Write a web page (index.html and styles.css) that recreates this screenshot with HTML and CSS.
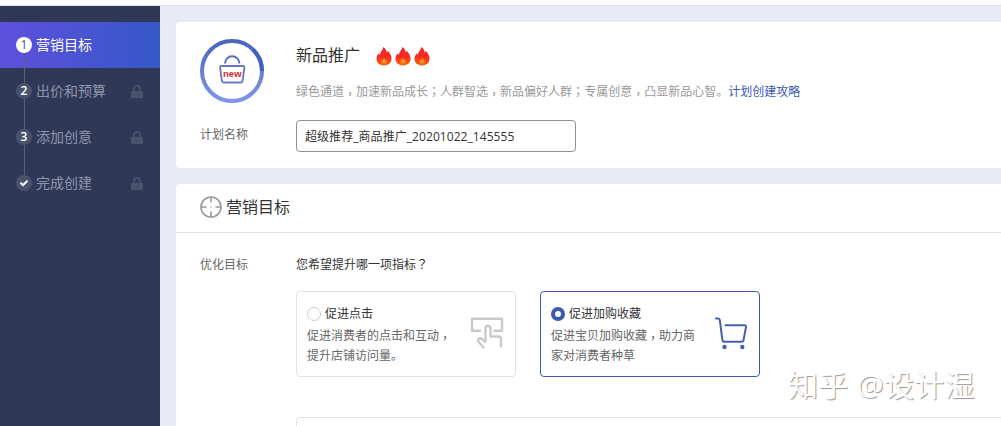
FILE: index.html
```
<!DOCTYPE html>
<html lang="zh-CN">
<head>
    <meta charset="UTF-8">
    <meta name="viewport" content="width=device-width, initial-scale=1.0">
    <title>新品推广</title>
    <link rel="stylesheet" href="styles.css">
</head>
<body>
    <svg class="sprite" aria-hidden="true">
        <symbol id="lock" viewBox="0 0 12 14">
            <path d="M3 6V4a3 3 0 0 1 6 0v2" fill="none" stroke="currentColor" stroke-width="1.8"/>
            <path d="M1 6h10a1 1 0 0 1 1 1v5a1 1 0 0 1-1 1H1a1 1 0 0 1-1-1V7a1 1 0 0 1 1-1z" fill="currentColor"/>
            <circle cx="6" cy="9.5" r=".8" fill="#3b4360"/>
        </symbol>
        <linearGradient id="flame-fill" x1="0" y1="0" x2="0" y2="1">
            <stop offset="0" stop-color="#f4242c"/>
            <stop offset="0.5" stop-color="#f62a22"/>
            <stop offset="1" stop-color="#f4660f"/>
        </linearGradient>
        <symbol id="flame" viewBox="0 0 17 20">
            <path d="M7.500 0C10.500 1.500 11.300 4 11.400 6.200 12 5.500 12.200 4.700 12.200 4 15 6.500 16.500 9.500 16.500 12.500 16.500 17 13 19.500 8.500 19.500S.5 17 .5 12.500C.5 9.500 2 7.700 3.200 6.500 3.400 7.500 3.700 8 4.300 8.500 4.200 5 7.500 3.500 7.500 0z" fill="url(#flame-fill)"/>
            <path d="M8.500 11c.3 1.500 3.300 2.300 3.300 4.700 0 1.900-1.500 2.800-3.300 2.800s-3.300-.9-3.300-2.800c0-2.400 3-3.200 3.300-4.700z" fill="#f86a12"/>
            <circle cx="8.500" cy="15.300" r="2" fill="#fa9422"/>
        </symbol>
    </svg>

    <div class="topbar"></div>
    <div class="layout">
        <nav class="sidebar">
            <div class="step active">
                <span class="step-num">1</span>
                <span class="step-name">营销目标</span>
            </div>
            <div class="step">
                <span class="step-num">2</span>
                <span class="step-name">出价和预算</span>
                <svg class="lock"><use href="#lock"/></svg>
            </div>
            <div class="step">
                <span class="step-num">3</span>
                <span class="step-name">添加创意</span>
                <svg class="lock"><use href="#lock"/></svg>
            </div>
            <div class="step">
                <span class="step-num">
                    <svg class="check" viewBox="0 0 10 8"><path d="M1.500 3.800l2.500 2.300 4.500-4.300"/></svg>
                </span>
                <span class="step-name">完成创建</span>
                <svg class="lock"><use href="#lock"/></svg>
            </div>
        </nav>

        <main class="content">
            <section class="card plan">
                <div class="plan-head">
                    <svg class="plan-logo" viewBox="0 0 64 64">
                        <defs>
                            <linearGradient id="ring" x1="0" y1="0" x2="0" y2="1">
                                <stop offset="0" stop-color="#4a66bc"/>
                                <stop offset="1" stop-color="#8094ea"/>
                            </linearGradient>
                        </defs>
                        <circle cx="32" cy="32" r="30" fill="none" stroke="url(#ring)" stroke-width="4"/>
                        <path d="M53.200 10.800A30 30 0 0 1 62 32" fill="none" stroke="#4160b8" stroke-width="4"/>
                        <path d="M25 24.500a7.200 7.200 0 0 1 14.400 0" fill="none" stroke="#5a70bd" stroke-width="2"/>
                        <path d="M21.500 27h21.500q1.600 0 1.400 1.600l-1.800 13.200q-.2 1.700-1.800 1.700H23.700q-1.600 0-1.800-1.700l-1.800-13.200Q19.900 27 21.500 27z" fill="none" stroke="#6478c8" stroke-width="1.800"/>
                        <text class="logo-text" x="32.300" y="37.800">new</text>
                    </svg>
                    <div class="plan-info">
                        <div class="plan-title">
                            <h1>新品推广</h1>
                            <span class="flames">
                                <svg><use href="#flame"/></svg>
                                <svg><use href="#flame"/></svg>
                                <svg><use href="#flame"/></svg>
                            </span>
                        </div>
                        <p class="plan-desc">绿色通道<span class="punct comma" lang="zh-TW">，</span>加速新品成长<span class="punct" lang="zh-TW">；</span>人群智选<span class="punct comma" lang="zh-TW">，</span>新品偏好人群<span class="punct" lang="zh-TW">；</span>专属创意<span class="punct comma" lang="zh-TW">，</span>凸显新品心智。<a href="#">计划创建攻略</a></p>
                    </div>
                </div>
                <div class="row">
                    <label class="row-label" for="plan-name">计划名称</label>
                    <input type="text" id="plan-name" value="超级推荐_商品推广_20201022_145555">
                </div>
            </section>

            <section class="card goal">
                <div class="card-header">
                    <svg class="target" viewBox="0 0 22 22">
                        <circle cx="11" cy="11" r="10"/>
                        <path d="M11 1v5.500M11 15.500V21M1 11h5.500M15.500 11H21M10.500 11h1"/>
                    </svg>
                    <h2>营销目标</h2>
                </div>
                <div class="row goal-row">
                    <span class="row-label">优化目标</span>
                    <div class="goal-body">
                        <p class="question">您希望提升哪一项指标<span class="punct" lang="zh-TW">？</span></p>
                        <div class="options">
                            <div class="option">
                                <div class="option-text">
                                    <div class="option-name"><i class="radio"></i>促进点击</div>
                                    <p>促进消费者的点击和互动<span class="punct comma" lang="zh-TW">，</span><br>提升店铺访问量。</p>
                                </div>
                                <svg class="option-icon" viewBox="0 0 34 34">
                                    <path d="M11 14.800H2V2.800h30v12h-8.500"/>
                                    <path d="M15.500 26.500V12.500a2.500 2.500 0 0 1 5 0V20.500h8q2.500 0 2.500 2.500v8.500"/>
                                    <path d="M15.500 26.500l-3.500-3.500q-2-1.500-3.300-.2t0 3.200l5.300 6"/>
                                </svg>
                            </div>
                            <div class="option selected">
                                <div class="option-text">
                                    <div class="option-name"><i class="radio"></i>促进加购收藏</div>
                                    <p>促进宝贝加购收藏<span class="punct comma" lang="zh-TW">，</span>助力商<br>家对消费者种草</p>
                                </div>
                                <svg class="option-icon" viewBox="0 0 34 34">
                                    <path d="M2 2.500H4q1.500 0 1.800 1.500l2.600 20q.3 1.800 2 1.800H27.500q1.700 0 2-1.600L32 11q.3-1.700-1.500-1.700H11.500"/>
                                    <circle cx="10.500" cy="31" r="2.200"/>
                                    <circle cx="28.300" cy="31" r="2.200"/>
                                </svg>
                            </div>
                        </div>
                        <div class="panel"></div>
                    </div>
                </div>
            </section>
        </main>
    </div>
    <div class="watermark">知乎 @设计湿</div>
</body>
</html>
```

FILE: styles.css
```
:root {
    --primary: #3b59b0;
    --sidebar: #303857;
    --page-bg: #e7eaf3;
    --text: #333;
    --text-secondary: #666;
    --text-light: #999;
    --border: #e2e3e6;
}

* {
    margin: 0;
    padding: 0;
    box-sizing: border-box;
}

body {
    height: 426px;
    overflow: hidden;
    display: flex;
    flex-direction: column;
    background: var(--page-bg);
    color: var(--text);
    font-family: "Open Sans", "Noto Sans CJK SC", sans-serif;
    font-size: 12px;
    line-height: 20px;
}

.sprite {
    position: absolute;
    width: 0;
    height: 0;
}

.topbar {
    flex: none;
    height: 6px;
    background: #fff;
    border-bottom: 1px solid #dcdee2;
}

.layout {
    flex: 1;
    min-height: 0;
    display: flex;
}

/* Sidebar */
.sidebar {
    width: 160px;
    padding-top: 16px;
    background: var(--sidebar);
}

.step {
    position: relative;
    display: flex;
    align-items: center;
    height: 46px;
    padding: 0 17px 0 16px;
    color: #8f96ac;
    font-size: 14px;
}

.step.active {
    background: linear-gradient(90deg, #5f50dc, #3558c8);
    color: #fff;
}

.step:not(:last-child)::after {
    content: "";
    position: absolute;
    left: 24px;
    top: 31px;
    width: 1px;
    height: 30px;
    background: #596079;
}

.step-num {
    display: flex;
    align-items: center;
    justify-content: center;
    width: 16px;
    height: 16px;
    margin-right: 4px;
    border-radius: 50%;
    background: #4a526e;
    color: #fff;
    font-size: 12px;
    font-weight: 600;
    line-height: 16px;
}

.active .step-num {
    background: #fff;
    color: #4c5278;
    font-weight: 400;
}

.check {
    width: 10px;
    height: 8px;
    fill: none;
    stroke: #fff;
    stroke-width: 2;
}

.lock {
    width: 12px;
    height: 14px;
    margin: 2px 0 0 auto;
    color: #4a526c;
}

/* Cards */
.content {
    flex: 1;
    display: flex;
    flex-direction: column;
    gap: 16px;
    padding: 16px 0 0 16px;
}

.card {
    background: #fff;
    border-radius: 4px 0 0 4px;
}

.plan {
    flex: none;
    height: 146px;
    padding: 17px 24px 0;
}

.plan-head {
    display: flex;
    gap: 32px;
    height: 81px;
}

.plan-logo {
    width: 64px;
    height: 64px;
}

.logo-text {
    fill: #e0262e;
    font-family: "Liberation Sans", sans-serif;
    font-size: 9.5px;
    font-weight: bold;
    text-anchor: middle;
}

.plan-title {
    display: flex;
    align-items: center;
    gap: 16px;
    height: 32px;
}

h1,
h2 {
    font-size: 16px;
    font-weight: 400;
    line-height: 24px;
}

.card-header h2 {
    margin-top: -2px;
}

.flames {
    display: flex;
    gap: 3px;
    padding-top: 2px;
}

.flames svg {
    width: 16px;
    height: 19px;
}

.plan-desc {
    margin-top: 11px;
    color: var(--text-light);
}

.plan-desc a {
    color: var(--primary);
    text-decoration: none;
}

/* Punctuation centered in its full-width cell */
.punct {
    font-family: "Noto Sans CJK TC", sans-serif;
    line-height: 1;
}

.comma {
    vertical-align: -3px;
}

.row {
    display: flex;
}

.row-label {
    width: 96px;
    color: var(--text-secondary);
}

.plan .row-label {
    padding-top: 5px;
}

input[type="text"] {
    width: 280px;
    height: 32px;
    padding: 0 8px;
    border: 1px solid #8c8f96;
    border-radius: 4px;
    outline: none;
    background: #fff;
    color: var(--text);
    font: inherit;
    letter-spacing: 0.06px;
}

.goal {
    flex: 1;
    min-height: 0;
    display: flex;
    flex-direction: column;
    border-bottom-left-radius: 0;
}

.card-header {
    flex: none;
    display: flex;
    align-items: center;
    gap: 4px;
    height: 49px;
    padding: 0 24px;
    border-bottom: 1px solid var(--border);
}

.target {
    width: 22px;
    height: 22px;
    margin-top: -2px;
    fill: none;
    stroke: #999;
    stroke-width: 1.6;
}

.goal-row {
    flex: 1;
    min-height: 0;
    padding: 22px 0 0 24px;
}

.goal-body {
    flex: 1;
    display: flex;
    flex-direction: column;
}

.options {
    display: flex;
    gap: 24px;
    margin-top: 16px;
}

.option {
    display: flex;
    justify-content: space-between;
    width: 220px;
    height: 86px;
    padding: 12px 11px 0 10px;
    border: 1px solid var(--border);
    border-radius: 4px;
    color: var(--text-secondary);
    white-space: nowrap;
}

.option.selected {
    border-color: var(--primary);
}

.option-name {
    display: flex;
    align-items: center;
    gap: 4px;
    height: 20px;
    margin-bottom: 2px;
    color: var(--text);
}

.radio {
    width: 14px;
    height: 14px;
    border: 1px solid #ccc;
    border-radius: 50%;
}

.selected .radio {
    border: 4px solid var(--primary);
}

.option-icon {
    flex: none;
    width: 34px;
    height: 34px;
    margin-top: 12px;
    fill: none;
    stroke: #c9c9c9;
    stroke-width: 2.400;
    stroke-linejoin: round;
}

.selected .option-icon {
    stroke: #4360b5;
    stroke-width: 2;
    stroke-linecap: round;
}

.selected .option-icon circle {
    fill: #4360b5;
    stroke: none;
}

.panel {
    flex: 1;
    margin-top: 40px;
    border: 1px solid var(--border);
    border-width: 1px 0 0 1px;
    border-radius: 4px 0 0 0;
}

.watermark {
    position: absolute;
    left: 788px;
    top: 365px;
    color: #fff;
    font-size: 30px;
    line-height: 40px;
    letter-spacing: 0.3px;
    white-space: nowrap;
    text-shadow: 1px 1px 1px #999;
}
```
